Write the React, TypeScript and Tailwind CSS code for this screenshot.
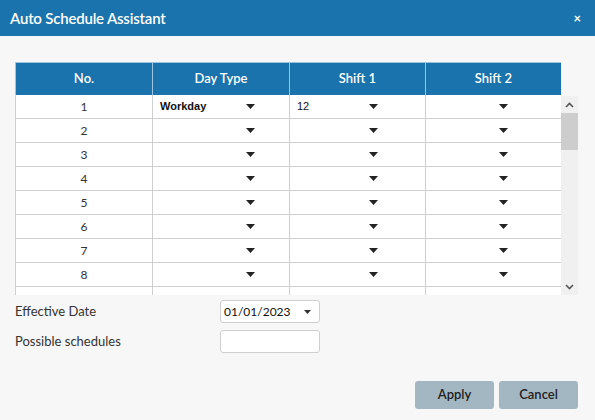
import React from "react";

const Caret = () => (
  <svg width="9" height="5" viewBox="0 0 9 5" className="block">
    <path d="M0 0H9L4.5 5Z" fill="#222" />
  </svg>
);

const rows = [1, 2, 3, 4, 5, 6, 7, 8, 9];
const cellFont = { fontFamily: "'Liberation Sans', Arial, sans-serif" };

function SelectCell({ value }: { value?: string }) {
  return (
    <div className="flex items-center justify-between h-full pl-[7px] pr-[34px] border-l border-[#cfcfcf]">
      <span className="text-[11px] font-bold text-[#111]" style={cellFont}>
        {value ?? ""}
      </span>
      <Caret />
    </div>
  );
}

export default function App() {
  const font = { fontFamily: "Lato, 'Noto Sans', sans-serif" };
  return (
    <div className="w-[595px] h-[420px] bg-[#f7f7f7] flex flex-col overflow-hidden" style={font}>
      <div className="h-[36px] bg-[#1a73ac] flex items-center justify-between pl-[10px] pr-[14px] shrink-0">
        <span className="text-white text-[15px] font-semibold tracking-[-0.2px]">Auto Schedule Assistant</span>
        <span className="text-white text-[13px] font-bold leading-none">×</span>
      </div>
      <div className="pt-[26px] pl-[15px] pr-[17px] flex flex-col">
        <div className="flex">
          <div className="w-[546px] flex flex-col">
            <div className="h-[33px] bg-[#1a73ac] grid grid-cols-[137px_137px_136px_136px] text-white text-[13px] font-semibold border-t border-[#9cc6e2]">
              {["No.", "Day Type", "Shift 1", "Shift 2"].map((h) => (
                <div key={h} className="flex items-center justify-center border-l border-[#9cc6e2]">
                  {h}
                </div>
              ))}
            </div>
            <div className="h-[200px] overflow-hidden bg-white border-l border-[#cfcfcf]">
              {rows.map((n) => (
                <div key={n} className="h-[24px] grid grid-cols-[136px_137px_136px_137px] border-b border-[#cfcfcf] text-[12px] text-[#333]">
                  <div className="flex items-center justify-center">{n}</div>
                  <SelectCell value={n === 1 ? "Workday" : undefined} />
                  <div className="flex items-center justify-between h-full pl-[7px] pr-[47px] border-l border-[#cfcfcf]">
                    <span className="text-[11px] text-[#111]" style={cellFont}>
                      {n === 1 ? "12" : ""}
                    </span>
                    <Caret />
                  </div>
                  <div className="flex items-center justify-end h-full pr-[54px] border-l border-[#cfcfcf]">
                    <Caret />
                  </div>
                </div>
              ))}
            </div>
          </div>
          <div className="w-[17px] mt-[34px] h-[199px] bg-[#f0f0f0] flex flex-col">
            <div className="h-[17px] flex items-center justify-center">
              <svg width="9" height="6" viewBox="0 0 9 6"><path d="M1 5L4.5 1.5L8 5" stroke="#555" strokeWidth="1.6" fill="none" /></svg>
            </div>
            <div className="h-[37px] bg-[#cdcdcd]" />
            <div className="flex-1" />
            <div className="h-[17px] flex items-center justify-center">
              <svg width="9" height="6" viewBox="0 0 9 6"><path d="M1 1L4.5 4.5L8 1" stroke="#555" strokeWidth="1.6" fill="none" /></svg>
            </div>
          </div>
        </div>
        <div className="mt-[5px] flex flex-col gap-[7px] text-[13px] text-[#333]">
          <div className="flex items-center">
            <span className="w-[205px]">Effective Date</span>
            <div className="w-[100px] h-[23px] bg-white border border-[#cfcfcf] rounded-[3px] flex items-center justify-between pl-[3px] pr-[8px] text-[#111] text-[12px]">
              <span>01/01/2023</span>
              <svg width="7" height="4" viewBox="0 0 7 4"><path d="M0 0H7L3.5 4Z" fill="#333" /></svg>
            </div>
          </div>
          <div className="flex items-center">
            <span className="w-[205px]">Possible schedules</span>
            <div className="w-[100px] h-[23px] bg-white border border-[#cfcfcf] rounded-[3px]" />
          </div>
        </div>
        <div className="mt-[28px] flex justify-end gap-[5px]">
          <button className="w-[79px] h-[28px] rounded-[3px] bg-[#a3b7c3] text-[#222] text-[13px] font-semibold">Apply</button>
          <button className="w-[79px] h-[28px] rounded-[3px] bg-[#a3b7c3] text-[#222] text-[13px] font-semibold">Cancel</button>
        </div>
      </div>
    </div>
  );
}
